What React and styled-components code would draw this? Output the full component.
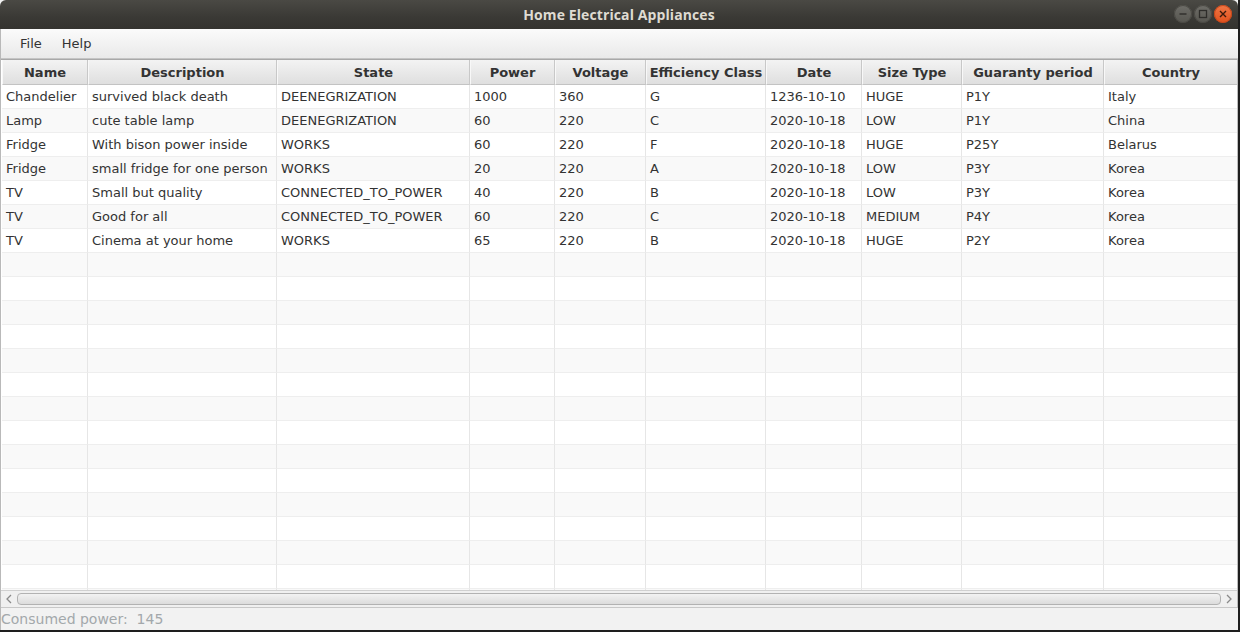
import React from "react";
import styled, { createGlobalStyle } from "styled-components";

const GlobalStyle = createGlobalStyle`
  html, body {
    margin: 0;
    padding: 0;
    background: #000;
  }
  body {
    font-family: "DejaVu Sans", "Liberation Sans", sans-serif;
  }
`;

const columns = [
  { key: "name", title: "Name", width: 86 },
  { key: "description", title: "Description", width: 189 },
  { key: "state", title: "State", width: 193 },
  { key: "power", title: "Power", width: 85 },
  { key: "voltage", title: "Voltage", width: 91 },
  { key: "efficiency", title: "Efficiency Class", width: 120 },
  { key: "date", title: "Date", width: 96 },
  { key: "size", title: "Size Type", width: 100 },
  { key: "guaranty", title: "Guaranty period", width: 142 },
  { key: "country", title: "Country", width: 134 },
];

const appliances = [
  ["Chandelier", "survived black death", "DEENEGRIZATION", "1000", "360", "G", "1236-10-10", "HUGE", "P1Y", "Italy"],
  ["Lamp", "cute table lamp", "DEENEGRIZATION", "60", "220", "C", "2020-10-18", "LOW", "P1Y", "China"],
  ["Fridge", "With bison power inside", "WORKS", "60", "220", "F", "2020-10-18", "HUGE", "P25Y", "Belarus"],
  ["Fridge", "small fridge for one person", "WORKS", "20", "220", "A", "2020-10-18", "LOW", "P3Y", "Korea"],
  ["TV", "Small but quality", "CONNECTED_TO_POWER", "40", "220", "B", "2020-10-18", "LOW", "P3Y", "Korea"],
  ["TV", "Good for all", "CONNECTED_TO_POWER", "60", "220", "C", "2020-10-18", "MEDIUM", "P4Y", "Korea"],
  ["TV", "Cinema at your home", "WORKS", "65", "220", "B", "2020-10-18", "HUGE", "P2Y", "Korea"],
];

const TOTAL_ROWS = 22;

const Window = styled.div`
  width: 1240px;
  height: 632px;
  display: flex;
  flex-direction: column;
  background: #f2f2f2;
  overflow: hidden;
  border-right: 2px solid #1e1e1e;
  border-bottom: 2px solid #1e1e1e;
  box-sizing: border-box;
`;

const TitleBar = styled.div`
  height: 29px;
  flex-shrink: 0;
  position: relative;
  display: flex;
  align-items: center;
  justify-content: center;
  background: linear-gradient(#4a4944, #3a3935 60%, #34332f);
  border-radius: 6px 6px 0 0;
  color: #dfdbd2;
  font-family: "Open Sans", "DejaVu Sans", sans-serif;
  font-weight: 700;
  font-size: 14px;
  letter-spacing: 0.1px;
`;

const WindowButtons = styled.div`
  position: absolute;
  right: 6px;
  top: 5px;
  display: flex;
  gap: 2px;
`;

const WinButton = styled.div`
  width: 18px;
  height: 18px;
  border-radius: 50%;
  display: flex;
  align-items: center;
  justify-content: center;
  background: ${(p) =>
    p.$close
      ? "linear-gradient(#f07746, #e0501c)"
      : "linear-gradient(#6e6d68, #56554f)"};
  box-shadow: inset 0 0 0 1px ${(p) => (p.$close ? "#c4461a" : "#4a4944")};
`;

const Content = styled.div`
  flex: 1;
  display: flex;
  flex-direction: column;
  border-left: 1px solid #b9b9b9;
  min-height: 0;
`;

const MenuBar = styled.div`
  height: 30px;
  flex-shrink: 0;
  display: flex;
  align-items: center;
  padding-left: 9px;
  background: linear-gradient(#fbfbfb, #e9e9e9);
  border-bottom: 1px solid #c4c4c4;
  box-sizing: border-box;
`;

const MenuItem = styled.div`
  font-size: 13px;
  color: #333;
  padding: 0 10px;
`;

const TableFrame = styled.div`
  flex: 1;
  min-height: 0;
  overflow: hidden;
  display: flex;
  flex-direction: column;
  background: #fff;
  border-top: 1px solid #a8a8a8;
  border-right: 1px solid #bdbdbd;
`;

const Grid = styled.div`
  display: grid;
  grid-template-columns: ${(p) => p.$template};
  flex: 1;
  min-height: 0;
  align-content: start;
  overflow: hidden;
  padding-left: 1px;
`;

const HeaderCell = styled.div`
  height: 25px;
  box-sizing: border-box;
  display: flex;
  align-items: center;
  justify-content: center;
  font-size: 13px;
  font-weight: 700;
  color: #333;
  background: linear-gradient(#f3f3f3, #dfdfdf);
  border-right: 1px solid #c8c8c8;
  border-left: 1px solid #f8f8f8;
  border-bottom: 1px solid #c3c3c3;
  white-space: nowrap;
  overflow: hidden;
`;

const Cell = styled.div`
  height: 24px;
  box-sizing: border-box;
  display: flex;
  align-items: center;
  padding-left: 4px;
  font-size: 13px;
  color: #333;
  background: ${(p) => (p.$odd ? "#f9f9f9" : "#ffffff")};
  border-right: 1px solid #e6e6e6;
  border-bottom: 1px solid #eeeeee;
  white-space: nowrap;
  overflow: hidden;
`;

const ScrollBar = styled.div`
  height: 18px;
  flex-shrink: 0;
  display: flex;
  align-items: center;
  gap: 2px;
  padding: 0 2px;
  background: #f0f0f0;
  border-top: 1px solid #d0d0d0;
  border-bottom: 1px solid #c8c8c8;
  box-sizing: border-box;
`;

const Arrow = styled.div`
  width: 12px;
  display: flex;
  align-items: center;
  justify-content: center;
`;

const Thumb = styled.div`
  flex: 1;
  height: 12px;
  border-radius: 4px;
  border: 1px solid #b2b2b2;
  background: linear-gradient(#f2f2f2, #dcdcdc);
  box-sizing: border-box;
`;

const StatusBar = styled.div`
  height: 22px;
  flex-shrink: 0;
  display: flex;
  align-items: center;
  font-size: 14px;
  color: #a3a8ab;
  white-space: pre;
  background: #f2f2f2;
`;

const Chevron = ({ left }) => (
  <svg width="8" height="10" viewBox="0 0 8 10">
    <path
      d={left ? "M6 1 L2 5 L6 9" : "M2 1 L6 5 L2 9"}
      fill="none"
      stroke="#8a8a8a"
      strokeWidth="1.3"
    />
  </svg>
);

const App = () => {
  const template = columns.map((c) => `${c.width}px`).join(" ");
  const rows = Array.from({ length: TOTAL_ROWS }, (_, i) => appliances[i] || null);

  return (
    <>
      <GlobalStyle />
      <Window>
        <TitleBar>
          Home Electrical Appliances
          <WindowButtons>
            <WinButton>
              <svg width="10" height="10" viewBox="0 0 10 10">
                <path d="M1.5 5 H8.5" stroke="#2e2d2a" strokeWidth="1.4" />
              </svg>
            </WinButton>
            <WinButton>
              <svg width="10" height="10" viewBox="0 0 10 10">
                <rect x="1.5" y="1.5" width="7" height="7" fill="none" stroke="#2e2d2a" strokeWidth="1.3" />
              </svg>
            </WinButton>
            <WinButton $close>
              <svg width="10" height="10" viewBox="0 0 10 10">
                <path d="M2 2 L8 8 M8 2 L2 8" stroke="#3a1a0c" strokeWidth="1.4" />
              </svg>
            </WinButton>
          </WindowButtons>
        </TitleBar>
        <Content>
          <MenuBar>
            <MenuItem>File</MenuItem>
            <MenuItem>Help</MenuItem>
          </MenuBar>
          <TableFrame>
            <Grid $template={template}>
              {columns.map((c) => (
                <HeaderCell key={c.key}>{c.title}</HeaderCell>
              ))}
              {rows.map((row, r) =>
                columns.map((c, ci) => (
                  <Cell key={`${r}-${c.key}`} $odd={r % 2 === 1}>
                    {row ? row[ci] : ""}
                  </Cell>
                ))
              )}
            </Grid>
            <ScrollBar>
              <Arrow>
                <Chevron left />
              </Arrow>
              <Thumb />
              <Arrow>
                <Chevron />
              </Arrow>
            </ScrollBar>
          </TableFrame>
          <StatusBar>Consumed power:  145</StatusBar>
        </Content>
      </Window>
    </>
  );
};

export default App;
